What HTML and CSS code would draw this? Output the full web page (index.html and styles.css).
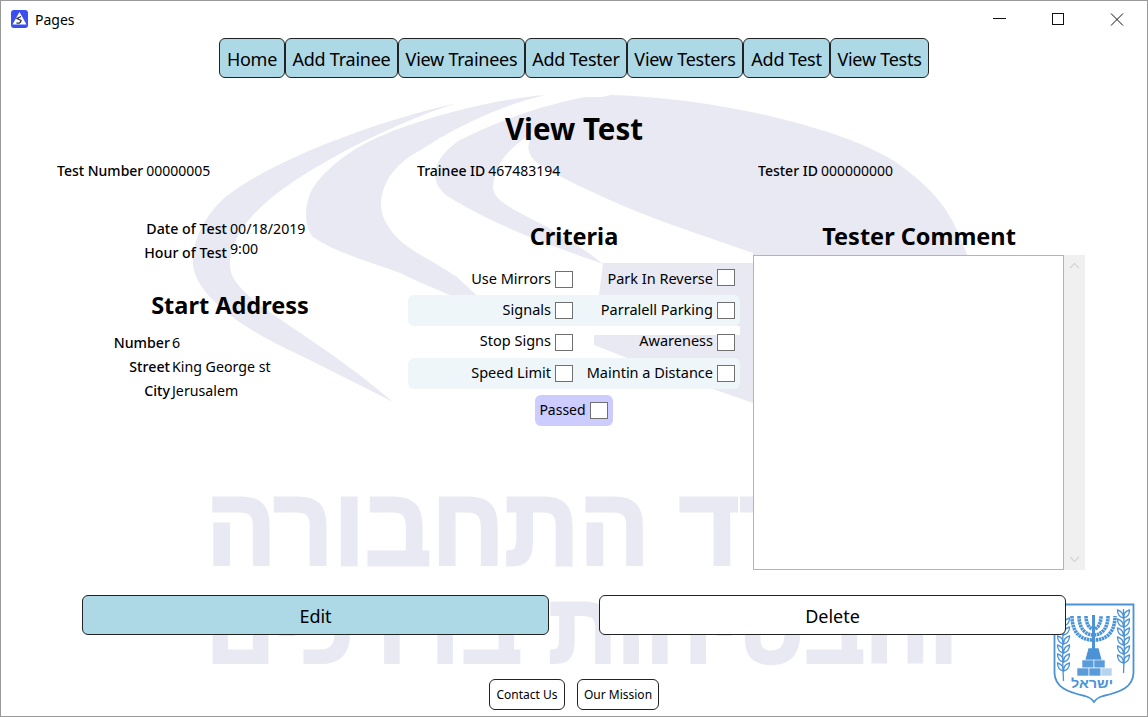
FILE: index.html
```html
<!DOCTYPE html>
<html>
  <head>
    <title>Pages</title>
    <link rel="stylesheet" href="styles.css">
  </head>
  <body>
    <div class="window">
      <!-- ministry logo and name behind everything -->
      <svg class="watermark" width="1146" height="715" viewBox="1 1 1146 715">
        <path d="M458,103 C370,122 262,165 222,200 C200,222 192,245 193,265 C196,295 240,325 275,343 C320,365 360,385 393,402 C350,365 310,340 277,317 C245,295 228,280 230,262 C232,240 245,220 269,200 C310,165 400,120 458,103Z"/>
        <path d="M546,95 C480,100 400,125 366,143 C335,160 312,182 308,200 C304,215 306,228 313,237 C340,255 372,262 400,273 C425,285 450,295 470,303 L490,308 C475,293 465,285 457,277 C435,262 418,255 403,243 C390,232 381,218 381,205 C381,180 400,160 421,150 C450,130 500,105 546,95Z"/>
        <path d="M585,97 C530,108 490,125 460,140 C445,150 435,162 435,175 C436,185 440,190 447,196 C470,210 500,225 530,237 C555,247 580,256 603,264 C580,245 550,228 520,213 C505,205 493,197 493,187 C495,165 505,150 537,130 C560,115 590,103 611,97Z"/>
        <path d="M611,95 C720,98 850,130 900,165 C930,188 950,205 967,255 L967,300 L753,300 L753,253 C710,238 670,225 633,210 C600,196 565,180 540,165 C530,158 527,150 529,143 C532,125 570,103 611,95Z"/>
        <path d="M603,263 L753,263 L753,403 L650,367 L594,345 L594,335Z"/>
        <rect class="gap" x="408" y="326" width="332" height="9"/>
        <text x="206" y="565" font-size="110" textLength="752" lengthAdjust="spacingAndGlyphs">משרד התחבורה</text>
        <text x="206" y="662" font-size="98" textLength="752" lengthAdjust="spacingAndGlyphs">והבטיחות בדרכים</text>
      </svg>

      <!-- state emblem -->
      <svg class="emblem" width="82" height="102" viewBox="0 0 82 102">
        <defs>
          <path id="leaf" d="M0,0 C-4,-1 -6,-4 -6,-8 C-2,-7 0,-4 0,0Z"/>
          <g id="branch">
            <use href="#leaf" x="8" y="62"/>
            <use href="#leaf" x="8" y="53"/>
            <use href="#leaf" x="8" y="44"/>
            <use href="#leaf" x="8" y="35"/>
            <use href="#leaf" x="8" y="26"/>
            <use href="#leaf" x="8" y="17"/>
            <use href="#leaf" transform="translate(8 62) scale(-1 1)"/>
            <use href="#leaf" transform="translate(8 53) scale(-1 1)"/>
            <use href="#leaf" transform="translate(8 44) scale(-1 1)"/>
            <use href="#leaf" transform="translate(8 35) scale(-1 1)"/>
            <use href="#leaf" transform="translate(8 26) scale(-1 1)"/>
            <use href="#leaf" transform="translate(8 17) scale(-1 1)"/>
            <path d="M8,72 C7,55 7,30 8,8"/>
          </g>
        </defs>
        <path class="shield" d="M1.5,1.5 H80.5 V70 C80,84 68,89 50,93 C46,94 43,96 41,99 C39,96 36,94 32,93 C14,89 2,84 1.5,70Z"/>
        <use href="#branch" x="2.5" y="6"/>
        <use href="#branch" transform="translate(78.5 -2) scale(-1 1)"/>
        <g class="menorah">
          <path d="M19,13 C19,30 28,37 40.5,37 C53,37 62,30 62,13"/>
          <path d="M26,13 C26,25 32,32 40.5,32 C49,32 55,25 55,13"/>
          <path d="M33,13 C33,20 36,26 40.5,26 C45,26 48,20 48,13"/>
          <path class="stem" d="M40.5,12 V56"/>
        </g>
        <path class="menorah-base" d="M33,57 H48 L45,46 H36Z"/>
        <rect class="block" x="29" y="57" width="12" height="8"/>
        <rect class="block" x="41" y="57" width="11" height="8"/>
        <rect class="block" x="24" y="65" width="12" height="8"/>
        <rect class="block" x="36" y="65" width="12" height="8"/>
        <rect class="block pale" x="48" y="65" width="11" height="8"/>
        <text class="emblem-name" x="18" y="85" textLength="42" lengthAdjust="spacingAndGlyphs">ישראל</text>
      </svg>

      <div class="titlebar">
        <svg class="app-icon" width="17" height="18" viewBox="0 0 17 18">
          <rect width="17" height="18" rx="3" fill="#3b4ef2"/>
          <path d="M8.5,2 L15.5,14.5 H1.5Z" fill="#fff"/>
          <path d="M10,6.5 L6,8.5 L10,10.5 C10,13 8,13.5 5.5,13" fill="none" stroke="#333" stroke-width="1.3"/>
        </svg>
        <span class="app-name">Pages</span>
        <div class="controls">
          <svg width="14" height="14" viewBox="0 0 14 14"><path d="M1,6.5 H14"/></svg>
          <svg width="14" height="14" viewBox="0 0 14 14"><rect x="1.5" y="1.5" width="11" height="11"/></svg>
          <svg width="14" height="14" viewBox="0 0 14 14"><path d="M1,1.5 L13,13.5 M13,1.5 L1,13.5"/></svg>
        </div>
      </div>

      <nav class="nav">
        <button class="nav-btn">Home</button>
        <button class="nav-btn">Add Trainee</button>
        <button class="nav-btn">View Trainees</button>
        <button class="nav-btn">Add Tester</button>
        <button class="nav-btn">View Testers</button>
        <button class="nav-btn">Add Test</button>
        <button class="nav-btn">View Tests</button>
      </nav>

      <h1 class="page-title">View Test</h1>

      <div class="ids">
        <div class="pair"><span class="label">Test Number</span><span>00000005</span></div>
        <div class="pair"><span class="label">Trainee ID</span><span>467483194</span></div>
        <div class="pair"><span class="label">Tester ID</span><span>000000000</span></div>
      </div>

      <div class="columns">
        <section class="details">
          <div class="when">
            <span class="label">Date of Test</span><span>00/18/2019</span>
            <span class="label">Hour of Test</span><span class="hour">9:00</span>
          </div>
          <h2 class="section-title address-title">Start Address</h2>
          <div class="address">
            <span class="label">Number</span><span>6</span>
            <span class="label">Street</span><span>King George st</span>
            <span class="label">City</span><span>Jerusalem</span>
          </div>
        </section>

        <section class="criteria">
          <h2 class="section-title">Criteria</h2>
          <div class="crit-rows">
            <div class="crit-row">
              <label class="crit">Use Mirrors <input type="checkbox"></label>
              <label class="crit">Park In Reverse <input type="checkbox" class="high"></label>
            </div>
            <div class="crit-row shaded">
              <label class="crit">Signals <input type="checkbox"></label>
              <label class="crit">Parralell Parking <input type="checkbox"></label>
            </div>
            <div class="crit-row tall">
              <label class="crit">Stop Signs <input type="checkbox"></label>
              <label class="crit">Awareness <input type="checkbox"></label>
            </div>
            <div class="crit-row shaded">
              <label class="crit">Speed Limit <input type="checkbox"></label>
              <label class="crit">Maintin a Distance <input type="checkbox"></label>
            </div>
          </div>
          <label class="passed">Passed <input type="checkbox"></label>
        </section>

        <section class="comment">
          <h2 class="section-title">Tester Comment</h2>
          <div class="comment-box">
            <textarea class="comment-text"></textarea>
            <div class="scroll">
              <svg width="21" height="20" viewBox="0 0 21 20"><path d="M6,13 L10.5,8.5 L15,13"/></svg>
              <svg width="21" height="20" viewBox="0 0 21 20"><path d="M6,7 L10.5,11.5 L15,7"/></svg>
            </div>
          </div>
        </section>
      </div>

      <div class="actions">
        <button class="action edit">Edit</button>
        <button class="action">Delete</button>
      </div>

      <div class="footer">
        <button class="foot-btn">Contact Us</button>
        <button class="foot-btn">Our Mission</button>
      </div>
    </div>
  </body>
</html>
```

FILE: styles.css
```css
html, body {
  margin: 0;
  padding: 0;
}

body {
  font-family: "Noto Sans", "Open Sans", sans-serif;
  font-size: 14.2px;
  color: #000;
  background-color: #fff;
}

button {
  font-family: inherit;
  color: #000;
  cursor: pointer;
  padding: 0;
}

.window {
  position: relative;
  box-sizing: border-box;
  width: 1148px;
  height: 717px;
  border: 1px solid #999;
  overflow: hidden;
  background-color: #fff;
}

.window > * {
  position: relative;
}

.window > .watermark,
.window > .emblem {
  position: absolute;
}

.watermark {
  left: 0;
  top: 0;
}

.watermark path,
.watermark text {
  fill: #e9e9f3;
}

.watermark text {
  font-family: "Liberation Sans", sans-serif;
  font-weight: bold;
  stroke: #e9e9f3;
  stroke-width: 3;
}

.watermark .gap {
  fill: #fff;
}

.emblem {
  left: 1052px;
  top: 602px;
}

.emblem path,
.emblem use {
  fill: none;
  stroke: #4c93d6;
  stroke-width: 1.3;
}

.emblem .shield {
  stroke-width: 1.8;
}

.emblem .menorah path {
  stroke-width: 3.6;
  stroke: #4c93d6;
  stroke-dasharray: 2.4 0.6;
}

.emblem .menorah .stem {
  stroke-dasharray: none;
  stroke-width: 3;
}

.emblem .menorah-base {
  fill: #4c93d6;
}

.block {
  fill: #5a9bd9;
  stroke: #fff;
  stroke-width: 0.6;
}

.block.pale {
  fill: #b5d3ef;
}

.emblem-name {
  font-family: "Liberation Sans", sans-serif;
  font-size: 13px;
  font-weight: bold;
  fill: #4c93d6;
}

/* title bar */
.titlebar {
  display: flex;
  align-items: center;
  height: 37px;
  padding-left: 10px;
}

.app-icon {
  margin-top: -1px;
}

.app-name {
  margin-left: 7px;
  font-size: 14px;
  margin-top: -1px;
}

.controls {
  display: flex;
  gap: 45px;
  margin-left: auto;
  margin-right: 23px;
  margin-top: -1px;
}

.controls svg {
  fill: none;
  stroke: #111;
  stroke-width: 1;
  display: block;
}

/* top menu */
.nav {
  display: grid;
  grid-template-columns: 66px 113px 127px 102px 116px 87px 99px;
  justify-content: center;
  height: 40px;
}

.nav-btn {
  padding-top: 2px;
  background-color: #add8e6;
  border: 1px solid #222;
  border-radius: 6px;
  font-size: 18px;
  letter-spacing: -0.25px;
  white-space: nowrap;
}

.page-title {
  margin: 29px 0 0;
  font-size: 29.5px;
  line-height: 44px;
  font-weight: bold;
  text-align: center;
}

.ids {
  display: grid;
  grid-template-columns: 360px 341px auto;
  margin-top: 10px;
  padding-left: 56px;
  height: 20px;
  line-height: 20px;
  font-size: 14px;
}

.pair {
  display: flex;
  gap: 3px;
}

.label {
  font-weight: 500;
  text-align: right;
}

.columns {
  display: grid;
  grid-template-columns: 335px 332px 332px;
  column-gap: 13px;
  margin-top: 38px;
  padding-left: 59px;
  height: 351px;
}

.details {
  width: 340px;
}

.section-title {
  margin: 2px 0 0;
  font-size: 23.5px;
  line-height: 30px;
  font-weight: bold;
  text-align: center;
}

/* left column */
.when {
  display: grid;
  grid-template-columns: 167px auto;
  column-gap: 3px;
  row-gap: 4px;
  line-height: 20px;
}

.hour {
  margin-top: -4px;
}

.address-title {
  margin-top: 24px;
  line-height: 36px;
}

.address {
  display: grid;
  grid-template-columns: 110px auto;
  column-gap: 2px;
  row-gap: 4px;
  margin-top: 10px;
  line-height: 20px;
}

/* criteria */
.crit-rows {
  margin-top: 13px;
}

.crit-row {
  display: grid;
  grid-template-columns: 165px 162px;
  align-items: center;
  height: 31px;
  border-radius: 6px;
}

.crit-row.tall {
  height: 32px;
}

.crit-row.shaded {
  background-color: #eef6fa;
}

.crit {
  display: flex;
  align-items: center;
  justify-content: flex-end;
  gap: 4px;
  padding-bottom: 4px;
  font-size: 14.5px;
  white-space: nowrap;
}

input[type="checkbox"] {
  appearance: none;
  box-sizing: border-box;
  width: 18px;
  height: 17px;
  margin: 0;
  background-color: #fff;
  border: 1px solid #707070;
}

.crit input[type="checkbox"] {
  margin-top: 4px;
}

.crit input[type="checkbox"].high {
  margin-top: 0;
}

.passed {
  display: flex;
  align-items: center;
  gap: 4px;
  width: fit-content;
  height: 29px;
  margin: 6px auto 0;
  padding: 0 5px 2px 4px;
  border-radius: 6px;
  background-color: #ccccff;
  font-size: 14px;
}

.passed input[type="checkbox"] {
  margin-top: 2px;
}

/* comment */
.comment .section-title {
  margin-bottom: 4px;
}

.comment-box {
  display: flex;
  width: 332px;
  height: 315px;
}

.comment-text {
  box-sizing: border-box;
  width: 311px;
  height: 315px;
  margin: 0;
  padding: 0;
  border: 1px solid #b4b4b4;
  border-radius: 0;
  resize: none;
  background-color: #fff;
  outline: none;
}

.scroll {
  display: flex;
  flex-direction: column;
  justify-content: space-between;
  width: 21px;
  background-color: #f0f0f0;
}

.scroll svg {
  display: block;
  fill: none;
  stroke: #d4d4d4;
  stroke-width: 1.2;
}

/* bottom buttons */
.actions {
  display: grid;
  grid-template-columns: 467px 467px;
  column-gap: 50px;
  margin-top: 25px;
  padding-left: 81px;
  height: 40px;
}

.action {
  padding-top: 2px;
  background-color: #fff;
  border: 1px solid #222;
  border-radius: 6px;
  font-size: 18px;
}

.action.edit {
  background-color: #add8e6;
}

.footer {
  display: flex;
  justify-content: center;
  gap: 12px;
  margin-top: 44px;
}

.foot-btn {
  height: 31px;
  background-color: #fff;
  border: 1px solid #222;
  border-radius: 6px;
  font-size: 12px;
  white-space: nowrap;
  width: 76px;
}

.foot-btn + .foot-btn {
  width: 82px;
}
```
